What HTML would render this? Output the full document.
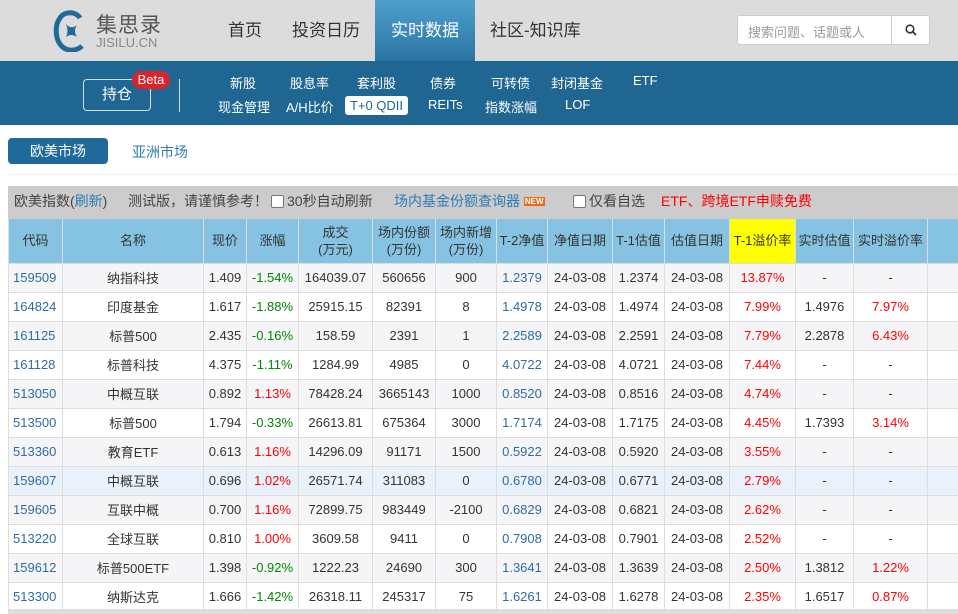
<!DOCTYPE html>
<html><head><meta charset="utf-8">
<style>
*{margin:0;padding:0;box-sizing:border-box}
body{width:958px;height:614px;overflow:hidden;background:#fff;font-family:"Liberation Sans","Noto Sans CJK SC",sans-serif;color:#333;position:relative}
.top{position:absolute;left:0;top:0;width:958px;height:61px;background:#dcdcdc}
.nav{position:absolute;top:0;height:61px;line-height:61px;font-size:17px;color:#333}
.act{background:linear-gradient(#4ea0cc,#2a74a4);color:#fff;text-align:center}
.search{position:absolute;left:737px;top:15px;width:193px;height:30px;background:#fff;border:1px solid #ccc;border-radius:3px}
.search span{position:absolute;left:10px;top:6px;font-size:13px;color:#999}
.search i{position:absolute;left:153px;top:0;width:1px;height:28px;background:#ccc}
.bar{position:absolute;left:0;top:61px;width:958px;height:64px;background:#206693}
.hold{position:absolute;left:83px;top:79px;width:68px;height:32px;border:1px solid #cfe0ea;border-radius:4px;color:#fff;font-size:15px;text-align:center;line-height:30px}
.beta{position:absolute;left:132px;top:71px;width:38px;height:18px;background:#d9252a;border-radius:9px;color:#fff;font-size:13px;text-align:center;line-height:18px}
.sep{position:absolute;left:179px;top:79px;width:1px;height:33px;background:#cfe0ea}
.l{position:absolute;color:#fff;font-size:13px}
.t0{position:absolute;left:345px;top:96px;width:63px;height:19px;background:#fff;border-radius:3px;color:#206693;font-size:13px;text-align:center;line-height:19px}
.tab1{position:absolute;left:8px;top:138px;width:100px;height:26px;background:#1f6a9a;border-radius:4px;color:#fff;font-size:14px;text-align:center;line-height:26px}
.tab2{position:absolute;left:132px;top:142px;color:#2e7bb5;font-size:14px}
.hr{position:absolute;left:8px;top:174px;width:950px;height:1px;background:#eee}
.tool{position:absolute;left:8px;top:186px;width:950px;height:33px;background:#cccccc;font-size:14px;line-height:31px;color:#444}
.tool span{position:absolute;top:0}
.cb{display:inline-block;width:13px;height:13px;border:1px solid #777;border-radius:2px;background:#fff;vertical-align:-2px;margin-right:3px}
table{position:absolute;left:8px;top:219px;border-collapse:collapse;table-layout:fixed;width:950px;font-size:13px}
th{background:#86c3e3;font-weight:normal;color:#333;height:44px;border:1px solid #ddd;border-top:none;line-height:17px}
td{height:29px;border:1px solid #ddd;text-align:center;white-space:nowrap;overflow:hidden}
td:first-child{text-align:left;padding-left:4px;color:#2e6da4}
tr.o td{background:#f5f5f7}
tr.h td{background:#e9f1fb}
.r{color:#f00}.g{color:#080}.b{color:#2e6da4}
.ye{background:#ffff00!important}
.sb{position:absolute;left:8px;top:609px;width:950px;height:5px;background:#ddd}
</style></head><body>
<div class="top"></div>
<svg style="position:absolute;left:52px;top:10px" width="36" height="42" viewBox="0 0 36 42">
<path d="M28 8 C24 1 12 1 8 8 C2 16 3 32 12 38 C18 42 26 40 30 36" fill="none" stroke="#1f6a9a" stroke-width="5"/>
<path d="M14 14 Q19 20 25 15 Q21 21 25 27 Q19 23 14 27 Q17 21 14 14Z" fill="#1f6a9a"/>
</svg>
<div style="position:absolute;left:96px;top:9px;font-size:21px;color:#555;letter-spacing:1px">集思录</div>
<div style="position:absolute;left:96px;top:35px;font-size:13px;color:#888">JISILU.CN</div>
<div class="nav" style="left:228px">首页</div>
<div class="nav" style="left:292px">投资日历</div>
<div class="nav act" style="left:375px;width:100px">实时数据</div>
<div class="nav" style="left:490px">社区-知识库</div>
<div class="search"><span>搜索问题、话题或人</span><i></i>
<svg style="position:absolute;left:167px;top:8px" width="12" height="12" viewBox="0 0 12 12"><circle cx="5" cy="5" r="3.8" fill="none" stroke="#333" stroke-width="1.6"/><path d="M8 8 L11 11" stroke="#333" stroke-width="1.8"/></svg></div>
<div class="bar"></div>
<div class="hold">持仓</div><div class="beta">Beta</div><div class="sep"></div>
<div class="l" style="left:230px;top:73px">新股</div>
<div class="l" style="left:290px;top:73px">股息率</div>
<div class="l" style="left:357px;top:73px">套利股</div>
<div class="l" style="left:430px;top:73px">债券</div>
<div class="l" style="left:491px;top:73px">可转债</div>
<div class="l" style="left:551px;top:73px">封闭基金</div>
<div class="l" style="left:633px;top:73px">ETF</div>
<div class="l" style="left:218px;top:97px">现金管理</div>
<div class="l" style="left:286px;top:97px">A/H比价</div>
<div class="t0">T+0 QDII</div>
<div class="l" style="left:428px;top:97px">REITs</div>
<div class="l" style="left:485px;top:97px">指数涨幅</div>
<div class="l" style="left:565px;top:97px">LOF</div>
<div class="tab1">欧美市场</div><div class="tab2">亚洲市场</div><div class="hr"></div>
<div class="tool">
<span style="left:6px">欧美指数(<span style="position:static;color:#2e7bb5">刷新</span>)</span>
<span style="left:120px">测试版，请谨慎参考！</span>
<span style="left:263px"><i class="cb"></i>30秒自动刷新</span>
<span style="left:386px;color:#2e7bb5">场内基金份额查询器 <b style="font-size:8px;background:#e86b1a;color:#fff;padding:0 1px;vertical-align:2px">NEW</b></span>
<span style="left:565px"><i class="cb"></i>仅看自选</span>
<span style="left:653px;color:#f00">ETF、跨境ETF申赎免费</span>
</div>
<table>
<colgroup><col style="width:54px"><col style="width:141px"><col style="width:43px"><col style="width:52px"><col style="width:74px"><col style="width:63px"><col style="width:61px"><col style="width:51px"><col style="width:65px"><col style="width:52px"><col style="width:65px"><col style="width:66px"><col style="width:58px"><col style="width:74px"><col style="width:31px"></colgroup>
<tr><th>代码</th><th>名称</th><th>现价</th><th>涨幅</th><th>成交<br>(万元)</th><th>场内份额<br>(万份)</th><th>场内新增<br>(万份)</th><th>T-2净值</th><th>净值日期</th><th>T-1估值</th><th>估值日期</th><th class="ye">T-1溢价率</th><th>实时估值</th><th>实时溢价率</th><th></th></tr>
<tr class="o"><td>159509</td><td>纳指科技</td><td>1.409</td><td class="g">-1.54%</td><td>164039.07</td><td>560656</td><td>900</td><td class="b">1.2379</td><td>24-03-08</td><td>1.2374</td><td>24-03-08</td><td class="r">13.87%</td><td>-</td><td>-</td><td></td></tr>
<tr><td>164824</td><td>印度基金</td><td>1.617</td><td class="g">-1.88%</td><td>25915.15</td><td>82391</td><td>8</td><td class="b">1.4978</td><td>24-03-08</td><td>1.4974</td><td>24-03-08</td><td class="r">7.99%</td><td>1.4976</td><td class="r">7.97%</td><td></td></tr>
<tr class="o"><td>161125</td><td>标普500</td><td>2.435</td><td class="g">-0.16%</td><td>158.59</td><td>2391</td><td>1</td><td class="b">2.2589</td><td>24-03-08</td><td>2.2591</td><td>24-03-08</td><td class="r">7.79%</td><td>2.2878</td><td class="r">6.43%</td><td></td></tr>
<tr><td>161128</td><td>标普科技</td><td>4.375</td><td class="g">-1.11%</td><td>1284.99</td><td>4985</td><td>0</td><td class="b">4.0722</td><td>24-03-08</td><td>4.0721</td><td>24-03-08</td><td class="r">7.44%</td><td>-</td><td>-</td><td></td></tr>
<tr class="o"><td>513050</td><td>中概互联</td><td>0.892</td><td class="r">1.13%</td><td>78428.24</td><td>3665143</td><td>1000</td><td class="b">0.8520</td><td>24-03-08</td><td>0.8516</td><td>24-03-08</td><td class="r">4.74%</td><td>-</td><td>-</td><td></td></tr>
<tr><td>513500</td><td>标普500</td><td>1.794</td><td class="g">-0.33%</td><td>26613.81</td><td>675364</td><td>3000</td><td class="b">1.7174</td><td>24-03-08</td><td>1.7175</td><td>24-03-08</td><td class="r">4.45%</td><td>1.7393</td><td class="r">3.14%</td><td></td></tr>
<tr class="o"><td>513360</td><td>教育ETF</td><td>0.613</td><td class="r">1.16%</td><td>14296.09</td><td>91171</td><td>1500</td><td class="b">0.5922</td><td>24-03-08</td><td>0.5920</td><td>24-03-08</td><td class="r">3.55%</td><td>-</td><td>-</td><td></td></tr>
<tr class="h"><td>159607</td><td>中概互联</td><td>0.696</td><td class="r">1.02%</td><td>26571.74</td><td>311083</td><td>0</td><td class="b">0.6780</td><td>24-03-08</td><td>0.6771</td><td>24-03-08</td><td class="r">2.79%</td><td>-</td><td>-</td><td></td></tr>
<tr class="o"><td>159605</td><td>互联中概</td><td>0.700</td><td class="r">1.16%</td><td>72899.75</td><td>983449</td><td>-2100</td><td class="b">0.6829</td><td>24-03-08</td><td>0.6821</td><td>24-03-08</td><td class="r">2.62%</td><td>-</td><td>-</td><td></td></tr>
<tr><td>513220</td><td>全球互联</td><td>0.810</td><td class="r">1.00%</td><td>3609.58</td><td>9411</td><td>0</td><td class="b">0.7908</td><td>24-03-08</td><td>0.7901</td><td>24-03-08</td><td class="r">2.52%</td><td>-</td><td>-</td><td></td></tr>
<tr class="o"><td>159612</td><td>标普500ETF</td><td>1.398</td><td class="g">-0.92%</td><td>1222.23</td><td>24690</td><td>300</td><td class="b">1.3641</td><td>24-03-08</td><td>1.3639</td><td>24-03-08</td><td class="r">2.50%</td><td>1.3812</td><td class="r">1.22%</td><td></td></tr>
<tr><td>513300</td><td>纳斯达克</td><td>1.666</td><td class="g">-1.42%</td><td>26318.11</td><td>245317</td><td>75</td><td class="b">1.6261</td><td>24-03-08</td><td>1.6278</td><td>24-03-08</td><td class="r">2.35%</td><td>1.6517</td><td class="r">0.87%</td><td></td></tr>
</table>
<div class="sb"></div>
</body></html>
